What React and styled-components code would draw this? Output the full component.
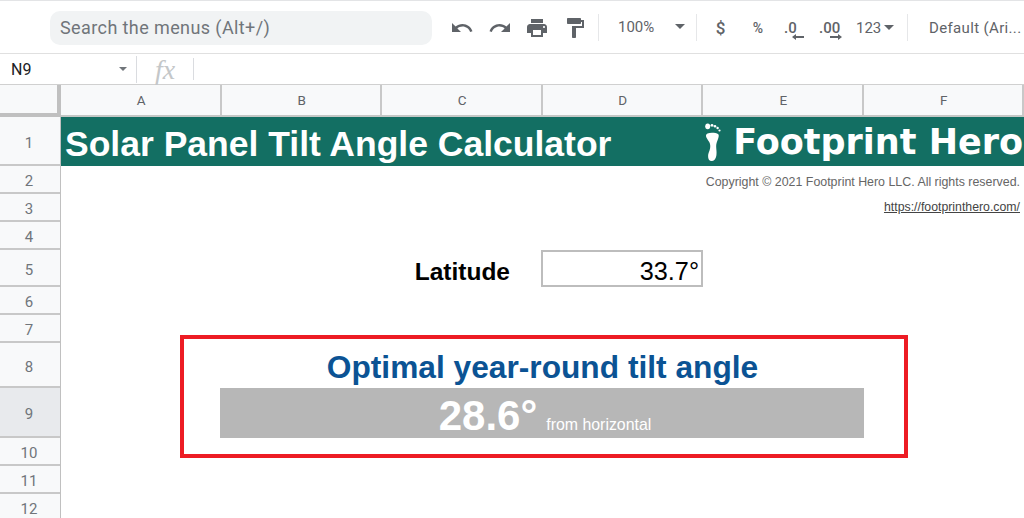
import React from "react";
import styled, { createGlobalStyle } from "styled-components";

const Global = createGlobalStyle`
  html, body {
    margin: 0;
    padding: 0;
    background: #fff;
    overflow: hidden;
  }
  * { box-sizing: border-box; }
`;

const rowHeights = [49, 28, 28, 28, 37, 28, 28, 45, 50, 28, 28, 28];
const gridRows = rowHeights.map((h) => `${h}px`).join(" ");

function Undo() {
  return (
    <svg width="24" height="24" viewBox="0 0 24 24" fill="#5f6368">
      <path d="M12.5 8c-2.65 0-5.05 1-6.9 2.6L2 7v9h9l-3.62-3.62c1.39-1.16 3.16-1.88 5.12-1.88 3.54 0 6.55 2.31 7.6 5.5l2.37-.78C21.08 11.03 17.15 8 12.5 8z" />
    </svg>
  );
}

function Redo() {
  return (
    <svg width="24" height="24" viewBox="0 0 24 24" fill="#5f6368">
      <path d="M18.4 10.6C16.55 9 14.15 8 11.5 8c-4.65 0-8.58 3.03-9.96 7.22L3.9 16c1.05-3.19 4.05-5.5 7.6-5.5 1.95 0 3.73.72 5.12 1.88L13 16h9V7l-3.6 3.6z" />
    </svg>
  );
}

function Print() {
  return (
    <svg width="24" height="24" viewBox="0 0 24 24" fill="#5f6368">
      <path d="M19 8H5c-1.66 0-3 1.34-3 3v6h4v4h12v-4h4v-6c0-1.66-1.34-3-3-3zm-3 11H8v-5h8v5zm3-7c-.55 0-1-.45-1-1s.45-1 1-1 1 .45 1 1-.45 1-1 1zm-1-9H6v4h12V3z" />
    </svg>
  );
}

function PaintFormat() {
  return (
    <svg width="24" height="24" viewBox="0 0 24 24" fill="#5f6368">
      <path d="M18 4V3c0-.55-.45-1-1-1H5c-.55 0-1 .45-1 1v4c0 .55.45 1 1 1h12c.55 0 1-.45 1-1V6h1v4H9v11c0 .55.45 1 1 1h2c.55 0 1-.45 1-1v-9h8V4h-3z" />
    </svg>
  );
}

function Foot() {
  return (
    <svg width="16" height="38" viewBox="0 0 16 38" fill="#fff">
      <path d="M2.500 10.500C5.500 9.300 11 9.700 13.300 11.200 14.700 12.500 12.600 17 11.600 20 10.400 24 12.300 28 11.300 33 10.800 36 8.800 38 6.700 38 4.200 38 3 36 3.100 33 3.300 29 5.700 27 5.200 22 4.800 18 1.200 16 1 13 .9 11.800 1.500 11 2.500 10.500z" />
      <ellipse cx="2.700" cy="3.300" rx="2.500" ry="2.900" />
      <circle cx="7" cy="2.300" r="1.400" />
      <circle cx="10" cy="3.200" r="1.300" />
      <circle cx="12.600" cy="5" r="1.200" />
      <circle cx="14.500" cy="7.500" r="1.100" />
    </svg>
  );
}

export default function App() {
  return (
    <Page>
      <Global />
      <Toolbar>
        <SearchBox>Search the menus (Alt+/)</SearchBox>
        <IconGroup>
          <Undo />
          <Redo />
          <Print />
          <PaintFormat />
        </IconGroup>
        <Divider />
        <Zoom>
          100%
          <Caret />
        </Zoom>
        <Divider />
        <FormatGroup>
          <FormatItem $w={37} $size={17}>$</FormatItem>
          <FormatItem $w={38} $size={14}>%</FormatItem>
          <Decimal $w={35}>
            .0
            <svg width="12" height="8" viewBox="0 0 12 8" fill="#5f6368">
              <path d="M0 4l4-3v2h8v2H4v2z" />
            </svg>
          </Decimal>
          <Decimal $w={39} $right>
            .00
            <svg width="12" height="8" viewBox="0 0 12 8" fill="#5f6368">
              <path d="M12 4L8 1v2H0v2h8v2z" />
            </svg>
          </Decimal>
          <NumberFormat>
            123
            <Caret />
          </NumberFormat>
        </FormatGroup>
        <Divider />
        <FontName>Default (Ari...</FontName>
      </Toolbar>
      <FormulaBar>
        <NameBox>
          N9
          <SmallCaret />
        </NameBox>
        <FxBox>fx</FxBox>
        <FxRule />
      </FormulaBar>
      <ColumnHeaders>
        <Corner />
        {["A", "B", "C", "D", "E", "F"].map((c) => (
          <ColumnHeader key={c}>{c}</ColumnHeader>
        ))}
      </ColumnHeaders>
      <Sheet>
        <RowHeaders>
          {rowHeights.map((h, i) => (
            <RowHeader key={i} $h={h} $active={i === 8}>
              {i + 1}
            </RowHeader>
          ))}
        </RowHeaders>
        <Cells>
          <Banner>
            <BannerTitle>Solar Panel Tilt Angle Calculator</BannerTitle>
            <Brand>
              <Foot />
              <BrandName>Footprint Hero</BrandName>
            </Brand>
          </Banner>
          <Copyright>Copyright © 2021 Footprint Hero LLC. All rights reserved.</Copyright>
          <SiteLink>https://footprinthero.com/</SiteLink>
          <LatitudeLabel>Latitude</LatitudeLabel>
          <LatitudeInput>33.7°</LatitudeInput>
          <ResultTitle>Optimal year-round tilt angle</ResultTitle>
          <ResultBar>
            <ResultValue>28.6°</ResultValue>
            <ResultUnit>from horizontal</ResultUnit>
          </ResultBar>
          <Highlight />
        </Cells>
      </Sheet>
    </Page>
  );
}

const Page = styled.div`
  width: 1024px;
  height: 518px;
  overflow: hidden;
  background: #fff;
  font-family: Roboto, "Liberation Sans", sans-serif;
`;

const Toolbar = styled.div`
  display: flex;
  align-items: center;
  height: 54px;
  padding: 1px 0 0 50px;
  border-top: 1px solid #e3e4e6;
  border-bottom: 1px solid #e0e0e0;
  color: #5f6368;
`;

const SearchBox = styled.div`
  width: 382px;
  height: 34px;
  margin-right: 18px;
  padding-left: 10px;
  border-radius: 10px;
  background: #f1f3f4;
  color: #70757a;
  font-size: 18px;
  line-height: 34px;
  letter-spacing: 0.4px;
  white-space: nowrap;
`;

const IconGroup = styled.div`
  display: flex;
  gap: 13.500px;
  width: 148px;
  flex: none;
`;

const Divider = styled.div`
  width: 1px;
  height: 27px;
  flex: none;
  background: #e6e7e9;
`;

const Zoom = styled.div`
  display: flex;
  align-items: center;
  justify-content: space-between;
  width: 97px;
  padding: 0 11px 0 19px;
  font-size: 15px;
  margin-top: -2px;
`;

const Caret = styled.span`
  width: 0;
  height: 0;
  border-left: 5.500px solid transparent;
  border-right: 5.500px solid transparent;
  border-top: 5px solid #5f6368;
`;

const SmallCaret = styled.span`
  width: 0;
  height: 0;
  border-left: 4px solid transparent;
  border-right: 4px solid transparent;
  border-top: 4px solid #70757a;
`;

const FormatGroup = styled.div`
  display: flex;
  align-items: center;
  width: 210px;
  flex: none;
  padding-left: 10px;
`;

const FormatItem = styled.div`
  width: ${(p) => p.$w}px;
  font-size: ${(p) => p.$size}px;
  font-weight: 500;
  text-align: center;
  padding-right: 10px;
`;

const Decimal = styled.div`
  position: relative;
  width: ${(p) => p.$w}px;
  height: 24px;
  font-size: 15px;
  font-weight: 500;
  line-height: 24px;
  padding-left: 2px;

  svg {
    position: absolute;
    top: 17px;
    left: ${(p) => (p.$right ? 13 : 10)}px;
  }
`;

const NumberFormat = styled.div`
  display: flex;
  align-items: center;
  gap: 3px;
  font-size: 15px;
`;

const FontName = styled.div`
  padding-left: 21px;
  font-size: 15px;
  letter-spacing: 0.35px;
  white-space: nowrap;
`;

const FormulaBar = styled.div`
  display: flex;
  align-items: center;
  height: 31px;
  border-bottom: 1px solid #d0d0d0;
`;

const NameBox = styled.div`
  display: flex;
  align-items: center;
  justify-content: space-between;
  width: 137px;
  height: 27px;
  padding: 0 9px 0 11px;
  border-right: 1px solid #dadce0;
  color: #202124;
  font-size: 16px;
`;

const FxBox = styled.div`
  width: 56px;
  text-align: center;
  color: #c4c7c9;
  font-family: "Liberation Serif", serif;
  font-style: italic;
  font-size: 28px;
  line-height: 27px;
`;

const FxRule = styled.div`
  width: 1px;
  height: 22px;
  background: #dadce0;
`;

const ColumnHeaders = styled.div`
  display: grid;
  grid-template-columns: 61px repeat(6, 160.500px);
  height: 32px;
  background: #f8f9fa;
  border-bottom: 2px solid #c4c7c5;
`;

const Corner = styled.div`
  border-right: 4px solid #c0c0c0;
  border-bottom: 4px solid #c0c0c0;
  margin-bottom: -2px;
`;

const ColumnHeader = styled.div`
  display: flex;
  align-items: center;
  justify-content: center;
  padding-left: 2px;
  border-right: 2px solid #c8c8c8;
  color: #5f6368;
  font-size: 13.500px;
`;

const Sheet = styled.div`
  display: flex;
`;

const RowHeaders = styled.div`
  width: 61px;
  flex: none;
  border-right: 1px solid #c0c0c0;
`;

const RowHeader = styled.div`
  display: flex;
  align-items: center;
  justify-content: center;
  height: ${(p) => p.$h}px;
  padding: 4px 2px 0 0;
  background: ${(p) => (p.$active ? "#e8eaed" : "#f8f9fa")};
  border-bottom: 2px solid #c8c8c8;
  color: #70757a;
  font-size: 15px;
`;

const Cells = styled.div`
  position: relative;
  flex: 1;
  display: grid;
  grid-template-columns: repeat(6, 160.500px);
  grid-template-rows: ${gridRows};
  color: #000;
  font-family: "Liberation Sans", Arial, sans-serif;
`;

const Banner = styled.div`
  grid-column: 1 / -1;
  grid-row: 1;
  display: flex;
  align-items: center;
  justify-content: space-between;
  padding-left: 4px;
  background: #136f63;
  color: #fff;
  overflow: hidden;
`;

const BannerTitle = styled.div`
  padding-top: 5px;
  font-size: 35.500px;
  font-weight: 700;
  white-space: nowrap;
`;

const Brand = styled.div`
  display: flex;
  align-items: center;
  flex: none;
  gap: 12px;
  margin-right: 1px;
`;

const BrandName = styled.div`
  font-family: "DejaVu Sans", sans-serif;
  font-size: 35px;
  font-weight: 700;
  white-space: nowrap;
`;

const Copyright = styled.div`
  grid-column: 1 / -1;
  grid-row: 2;
  align-self: center;
  text-align: right;
  padding: 4px 4px 0 0;
  color: #666;
  font-size: 12.400px;
`;

const SiteLink = styled.div`
  grid-column: 1 / -1;
  grid-row: 3;
  align-self: center;
  text-align: right;
  padding: 0 4px 2px 0;
  color: #444;
  font-size: 12.300px;
  text-decoration: underline;
`;

const LatitudeLabel = styled.div`
  grid-column: 1 / 3;
  grid-row: 5;
  align-self: center;
  text-align: right;
  margin-right: -128px;
  padding-top: 6px;
  font-size: 24.500px;
  font-weight: 700;
`;

const LatitudeInput = styled.div`
  grid-column: 4;
  grid-row: 5;
  display: flex;
  align-items: center;
  justify-content: flex-end;
  padding: 5px 2px 0 0;
  border: 2px solid #bdbdbd;
  margin: 0 0 0 -2px;
  font-size: 25.300px;
`;

const ResultTitle = styled.div`
  grid-column: 1 / -1;
  grid-row: 8;
  align-self: center;
  text-align: center;
  padding-top: 4px;
  color: #0b5394;
  font-size: 31.700px;
  font-weight: 700;
`;

const ResultBar = styled.div`
  grid-column: 1 / -1;
  grid-row: 9;
  display: flex;
  align-items: baseline;
  justify-content: center;
  gap: 9px;
  margin: 0 160px 0 159px;
  padding: 6px 0 0 6px;
  background: #b7b7b7;
  color: #fff;
`;

const ResultValue = styled.div`
  font-size: 42px;
  font-weight: 700;
  line-height: 44px;
`;

const ResultUnit = styled.div`
  font-size: 15.900px;
`;

const Highlight = styled.div`
  position: absolute;
  left: 119px;
  top: 218px;
  width: 728px;
  height: 123px;
  border: 4px solid #ed1c24;
  pointer-events: none;
`;
